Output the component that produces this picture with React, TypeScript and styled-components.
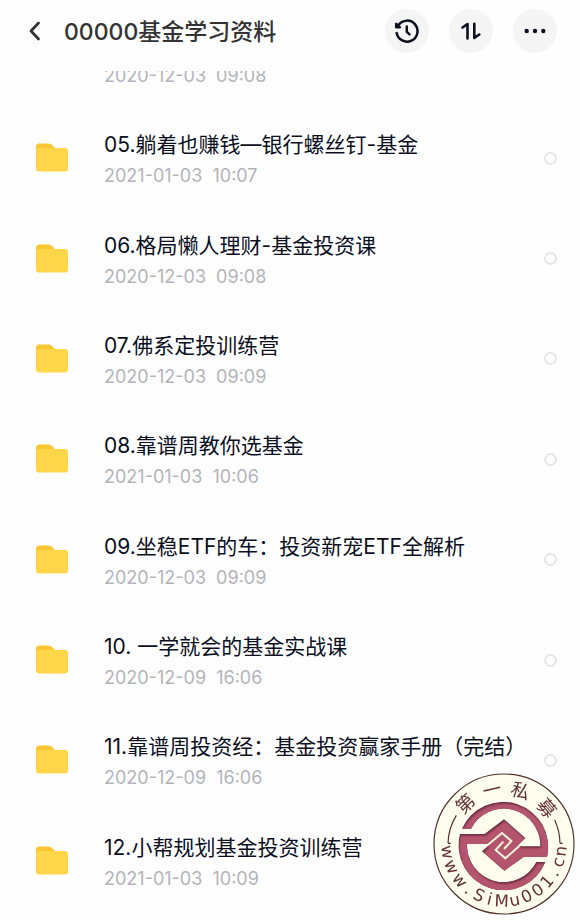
import React from "react";
import styled, { createGlobalStyle } from "styled-components";

const GlobalStyle = createGlobalStyle`
  * { box-sizing: border-box; }
  body { margin: 0; background: #fefefe; font-family: Inter, "Noto Sans CJK SC", sans-serif; }
  button, input { font: inherit; }
`;

const Screen = styled.main`
  position: relative;
  min-height: 100vh;
  display: flex;
  flex-direction: column;
  overflow: hidden;
  background: #fefefe;
`;

const TopBar = styled.header`
  flex: none;
  display: flex;
  align-items: center;
  height: 71px;
  padding: 0 23px 9px 24px;
`;

const BackButton = styled.button`
  display: grid;
  place-items: center;
  width: 24px;
  height: 32px;
  padding: 0;
  border: 0;
  background: none;
  color: #333;
`;

const Heading = styled.h1`
  flex: 1;
  min-width: 0;
  margin: 0 0 0 16px;
  padding-top: 2px;
  font-size: 23px;
  line-height: 36px;
  font-weight: 500;
  color: #333;
  white-space: nowrap;
`;

const Actions = styled.div`
  display: flex;
  gap: 20px;
`;

const RoundButton = styled.button`
  display: grid;
  place-items: center;
  width: 44px;
  height: 44px;
  padding: 0;
  border: 0;
  border-radius: 50%;
  background: #f5f5f5;
  color: #0b0f1e;
`;

const Viewport = styled.section`
  flex: 1;
  display: flex;
  flex-direction: column;
  padding-bottom: 9px;
`;

const ScrolledRow = styled.div`
  flex: none;
  height: 37px;
  padding-left: 104px;
  overflow: hidden;

  time {
    margin-top: -10px;
  }
`;

const FileList = styled.ul`
  flex: 1;
  display: grid;
  grid-auto-rows: minmax(100px, 1fr);
  margin: 0;
  padding: 0;
  list-style: none;
`;

const Row = styled.li`
  display: flex;
  align-items: center;
  padding: 0 23px 0 34px;
`;

const Info = styled.div`
  flex: 1;
  min-width: 0;
  margin-left: 34px;
  padding-top: 4px;
`;

const Name = styled.label`
  display: block;
  font-size: 21px;
  line-height: 32px;
  color: #0b0f1e;
  white-space: nowrap;
`;

const Time = styled.time`
  display: block;
  font-size: 18px;
  line-height: 30px;
  color: #b2b4ba;
  white-space: pre;
`;

const Tick = styled.input`
  appearance: none;
  flex: none;
  width: 13px;
  height: 13px;
  margin: 0;
  border: 2px solid #e6e6e8;
  border-radius: 50%;
  background: #fff;
`;

const Seal = styled.svg`
  position: absolute;
  right: 5px;
  bottom: 5px;
  width: 142px;
  height: 142px;
  opacity: 0.96;
  pointer-events: none;
`;

const SealText = styled.text`
  fill: #5e2a2c;
`;

const files = [
  { name: "05.躺着也赚钱—银行螺丝钉-基金", time: "2021-01-03  10:07" },
  { name: "06.格局懒人理财-基金投资课", time: "2020-12-03  09:08" },
  { name: "07.佛系定投训练营", time: "2020-12-03  09:09" },
  { name: "08.靠谱周教你选基金", time: "2021-01-03  10:06" },
  { name: "09.坐稳ETF的车：投资新宠ETF全解析", time: "2020-12-03  09:09" },
  { name: "10. 一学就会的基金实战课", time: "2020-12-09  16:06" },
  { name: "11.靠谱周投资经：基金投资赢家手册（完结）", time: "2020-12-09  16:06" },
  { name: "12.小帮规划基金投资训练营", time: "2021-01-03  10:09" },
];

const Folder = () => (
  <svg width="36" height="36" viewBox="0 0 36 36" aria-hidden="true">
    <path d="M2 7q0-3.500 3.500-3.500h9q2 0 3.500 1.500l3 3V16H2z" fill="#fbc62f" />
    <rect x="2" y="8" width="32" height="23.500" rx="3" fill="#ffd54a" />
  </svg>
);

const BackIcon = () => (
  <svg width="24" height="24" viewBox="0 0 24 24" fill="none" stroke="currentColor" strokeWidth="2.800" strokeLinecap="round" strokeLinejoin="round">
    <path d="M14.500 4 7 12l7.500 8" />
  </svg>
);

const HistoryIcon = () => (
  <svg width="26" height="26" viewBox="-1 -1 26 26" fill="none" stroke="currentColor" strokeWidth="2.500" strokeLinecap="round" strokeLinejoin="round">
    <path d="M1.700 14A10.500 10.500 0 1 0 3.500 6" />
    <path d="M1.200 4.800v3.400h3.600z" fill="currentColor" />
    <path d="M11.800 7.500v5.300l2.700 2.600" />
  </svg>
);

const SortIcon = () => (
  <svg width="24" height="24" viewBox="0 0 24 24" fill="none" stroke="currentColor" strokeWidth="2.600" strokeLinecap="round" strokeLinejoin="round">
    <path d="M8.500 19.500V5L3.500 8.500M15.300 4.700V19l5-3.500" />
  </svg>
);

const MoreIcon = () => (
  <svg width="24" height="24" viewBox="0 0 24 24" fill="currentColor">
    <circle cx="3.700" cy="12" r="2.200" />
    <circle cx="12" cy="12" r="2.200" />
    <circle cx="20.300" cy="12" r="2.200" />
  </svg>
);

const CENTER = 146;

type Glyph = { advance: number; angle: number };

/* Spreads glyphs round the seal; each angle, in degrees, is also the glyph's own rotation. */
function onRing(glyphs: Glyph[], radius: number, top: boolean) {
  const xs: number[] = [];
  const ys: number[] = [];
  const side = top ? 1 : -1;
  for (const { advance, angle } of glyphs) {
    const a = (angle * Math.PI) / 180;
    xs.push(CENTER + side * radius * Math.sin(a) - (advance / 2) * Math.cos(a));
    ys.push(CENTER + 2 - side * radius * Math.cos(a) - (advance / 2) * Math.sin(a));
  }
  return { x: xs.join(" "), y: ys.join(" "), rotate: glyphs.map((g) => g.angle).join(" ") };
}

const nameRing = onRing(
  [-43.8, -12.4, 17.2, 50].map((angle) => ({ advance: 56, angle })),
  147,
  true,
);

const siteRing = onRing(
  [
    { advance: 41, angle: 82 },
    { advance: 41, angle: 66.5 },
    { advance: 41, angle: 50.5 },
    { advance: 16, angle: 38 },
    { advance: 32, angle: 26 },
    { advance: 14, angle: 14.5 },
    { advance: 43, angle: 2.4 },
    { advance: 32, angle: -10.8 },
    { advance: 32, angle: -23.4 },
    { advance: 32, angle: -36.3 },
    { advance: 32, angle: -49 },
    { advance: 16, angle: -60 },
    { advance: 27, angle: -71.5 },
    { advance: 32, angle: -83 },
  ],
  188,
  false,
);

const emblem =
  "M20 102A135 135 0 0 1 275 187H205L147 228 80 170 105 148H35A110 110 0 0 0 243 202H270A135 135 0 0 1 14 118H88L146 74 210 130 185 155H255A110 110 0 0 0 47 102Z";

const SealMark = () => (
  <Seal viewBox="-67 -65 426 426" role="img" aria-label="第一私募 www.SiMu001.cn">
    <defs>
      <clipPath id="emblem-clip">
        <path d={emblem} />
      </clipPath>
      <filter id="emblem-soft" x="-10%" y="-10%" width="120%" height="120%">
        <feGaussianBlur stdDeviation="3" />
      </filter>
    </defs>
    <circle cx="146" cy="148" r="210" fill="#fffdee" stroke="#4a2a22" strokeWidth="3.500" />
    <path d="M-22 146A168 168 0 0 1 3 62M314 146A168 168 0 0 0 298 76M-22 146h8M314 146h8" fill="none" stroke="#4a2a22" strokeWidth="3.500" />
    <g clipPath="url(#emblem-clip)">
      <rect x="0" y="0" width="300" height="300" fill="#5f1f33" />
      <path d={emblem} fill="#b24f68" stroke="#b24f68" strokeWidth="3" transform="translate(3 6)" filter="url(#emblem-soft)" />
    </g>
    <path d="M98 150 140 115 168 139 146 163M192 154 150 191 121 166 144 141" fill="none" stroke="#fff6da" strokeWidth="6" />
    <SealText {...nameRing} fontFamily="'Noto Sans CJK SC', sans-serif" fontSize="56">第一私募</SealText>
    <SealText {...siteRing} fontFamily="'DejaVu Sans', sans-serif" fontSize="50">www.SiMu001.cn</SealText>
  </Seal>
);

export default function App() {
  return (
    <Screen>
      <GlobalStyle />
      <TopBar>
        <BackButton aria-label="返回"><BackIcon /></BackButton>
        <Heading>00000基金学习资料</Heading>
        <Actions>
          <RoundButton aria-label="历史"><HistoryIcon /></RoundButton>
          <RoundButton aria-label="排序"><SortIcon /></RoundButton>
          <RoundButton aria-label="更多"><MoreIcon /></RoundButton>
        </Actions>
      </TopBar>
      <Viewport>
        <ScrolledRow>
          <Time>{"2020-12-03  09:08"}</Time>
        </ScrolledRow>
        <FileList>
          {files.map((file, i) => (
            <Row key={file.name}>
              <Folder />
              <Info>
                <Name htmlFor={`file-${i}`}>{file.name}</Name>
                <Time>{file.time}</Time>
              </Info>
              <Tick id={`file-${i}`} type="checkbox" />
            </Row>
          ))}
        </FileList>
      </Viewport>
      <SealMark />
    </Screen>
  );
}
